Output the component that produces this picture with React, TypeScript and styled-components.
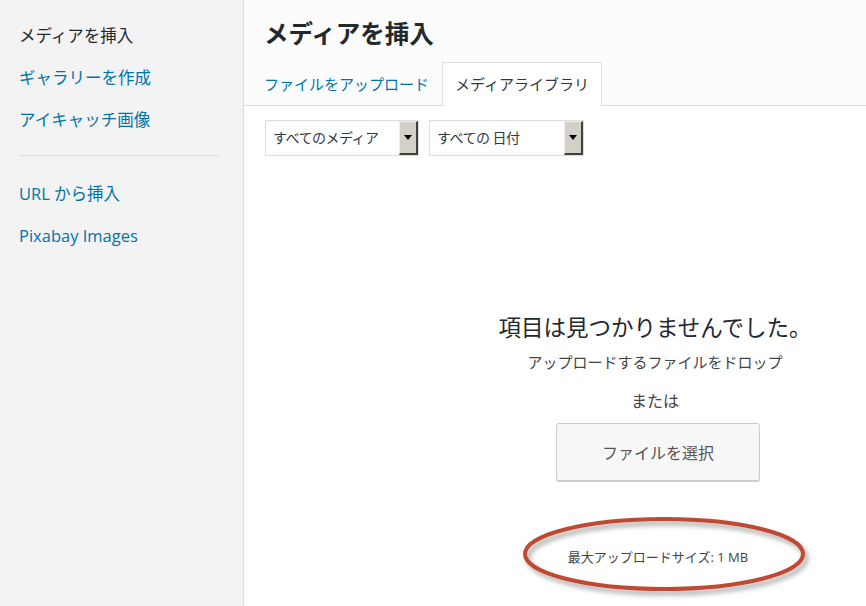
import React from "react";
import styled, { createGlobalStyle } from "styled-components";

const Global = createGlobalStyle`
  html, body { margin: 0; padding: 0; }
  body {
    font-family: "Open Sans", "Noto Sans CJK JP", sans-serif;
    background: #fff;
    -webkit-font-smoothing: antialiased;
  }
  * { box-sizing: border-box; }
`;

const Frame = styled.div`
  display: flex;
  width: 866px;
  height: 606px;
  overflow: hidden;
`;

const Sidebar = styled.nav`
  width: 244px;
  flex: none;
  background: #f3f3f3;
  border-right: 1px solid #dddddd;
  padding: 15px 0 0 19px;
  display: flex;
  flex-direction: column;
`;

const MenuItem = styled.a<{ $active?: boolean }>`
  display: block;
  font-size: 16.5px;
  line-height: 42px;
  height: 42px;
  color: ${(p) => (p.$active ? "#23282d" : "#0073aa")};
  text-decoration: none;
`;

const Separator = styled.div`
  width: 200px;
  height: 1px;
  background: #dddddd;
  margin: 14px 0 17px;
`;

const Main = styled.main`
  flex: 1;
  display: flex;
  flex-direction: column;
  background: #fff;
  min-width: 0;
`;

const Header = styled.header`
  background: #fcfcfc;
  border-bottom: 1px solid #dddddd;
  display: flex;
  flex-direction: column;
`;

const Title = styled.h1`
  margin: 0;
  padding: 6px 0 0 20px;
  height: 62px;
  line-height: 56px;
  font-size: 24.5px;
  font-weight: 700;
  color: #23282d;
`;

const Tabs = styled.div`
  display: flex;
  padding-left: 7px;
  height: 43px;
`;

const Tab = styled.a<{ $active?: boolean }>`
  display: block;
  padding: 0 12px;
  height: 44px;
  line-height: 42px;
  font-size: 15px;
  border: 1px solid ${(p) => (p.$active ? "#dddddd" : "transparent")};
  border-bottom: none;
  background: ${(p) => (p.$active ? "#fff" : "transparent")};
  color: ${(p) => (p.$active ? "#32373c" : "#0073aa")};
  text-decoration: none;
  position: relative;
  z-index: 1;
`;

const Toolbar = styled.div`
  display: flex;
  gap: 10px;
  padding: 14px 0 0 21px;
`;

const Select = styled.div<{ $width: number }>`
  width: ${(p) => p.$width}px;
  height: 36px;
  border: 1px solid #dddddd;
  display: flex;
  align-items: stretch;
  background: #fff;
  box-shadow: inset 0 1px 2px rgba(0, 0, 0, 0.04);
`;

const SelectText = styled.span`
  flex: 1;
  font-size: 14px;
  line-height: 34px;
  padding-left: 7px;
  color: #32373c;
  letter-spacing: -0.5px;
`;

const ArrowBtn = styled.span`
  width: 19px;
  background: #d4d0c8;
  border-top: 1px solid #f0eee9;
  border-left: 1px solid #f0eee9;
  border-right: 2px solid #404040;
  border-bottom: 2px solid #404040;
  display: flex;
  align-items: center;
  justify-content: center;
  &::after {
    content: "";
    border-left: 4px solid transparent;
    border-right: 4px solid transparent;
    border-top: 5px solid #000;
    margin-right: 1px;
  }
`;

const Empty = styled.section`
  display: flex;
  flex-direction: column;
  align-items: center;
  padding: 156px 0 0 200px;
  color: #444;
`;

const EmptyTitle = styled.h2`
  margin: 0;
  font-size: 22.5px;
  line-height: 32px;
  font-weight: 400;
  color: #23282d;
`;

const DropText = styled.p`
  margin: 2px 0 0;
  font-size: 15px;
  line-height: 32px;
  color: #444;
`;

const OrText = styled.p`
  margin: 7px 0 0;
  font-size: 16px;
  line-height: 32px;
  color: #444;
`;

const SelectButton = styled.button`
  margin: 6px 0 0 6px;
  width: 204px;
  height: 58px;
  border: 1px solid #cccccc;
  border-radius: 3px;
  background: #f7f7f7;
  box-shadow: 0 1px 0 #cccccc;
  font-family: inherit;
  font-size: 16px;
  color: #555;
  cursor: pointer;
`;

const MaxSize = styled.p`
  position: relative;
  margin: 66px 0 0 6px;
  font-size: 13px;
  line-height: 20px;
  color: #444;
`;

const Ring = styled.svg`
  position: absolute;
  left: -50px;
  top: -44px;
  width: 300px;
  height: 100px;
  overflow: visible;
  pointer-events: none;
`;

export default function App() {
  return (
    <>
      <Global />
      <Frame>
        <Sidebar>
          <MenuItem $active>メディアを挿入</MenuItem>
          <MenuItem>ギャラリーを作成</MenuItem>
          <MenuItem>アイキャッチ画像</MenuItem>
          <Separator />
          <MenuItem>URL から挿入</MenuItem>
          <MenuItem>Pixabay Images</MenuItem>
        </Sidebar>
        <Main>
          <Header>
            <Title>メディアを挿入</Title>
            <Tabs>
              <Tab>ファイルをアップロード</Tab>
              <Tab $active>メディアライブラリ</Tab>
            </Tabs>
          </Header>
          <Toolbar>
            <Select $width={154}>
              <SelectText>すべてのメディア</SelectText>
              <ArrowBtn />
            </Select>
            <Select $width={155}>
              <SelectText>すべての 日付</SelectText>
              <ArrowBtn />
            </Select>
          </Toolbar>
          <Empty>
            <EmptyTitle>項目は見つかりませんでした。</EmptyTitle>
            <DropText>アップロードするファイルをドロップ</DropText>
            <OrText>または</OrText>
            <SelectButton>ファイルを選択</SelectButton>
            <MaxSize>
              最大アップロードサイズ: 1 MB
              <Ring viewBox="0 0 300 100">
                <defs>
                  <filter id="sh" x="-10%" y="-30%" width="120%" height="160%">
                    <feDropShadow dx="3" dy="4" stdDeviation="2.5" floodColor="#000" floodOpacity="0.35" />
                  </filter>
                </defs>
                <ellipse cx="146" cy="51" rx="139" ry="35" fill="none" stroke="#bf4a30" strokeWidth="4" filter="url(#sh)" />
              </Ring>
            </MaxSize>
          </Empty>
        </Main>
      </Frame>
    </>
  );
}
